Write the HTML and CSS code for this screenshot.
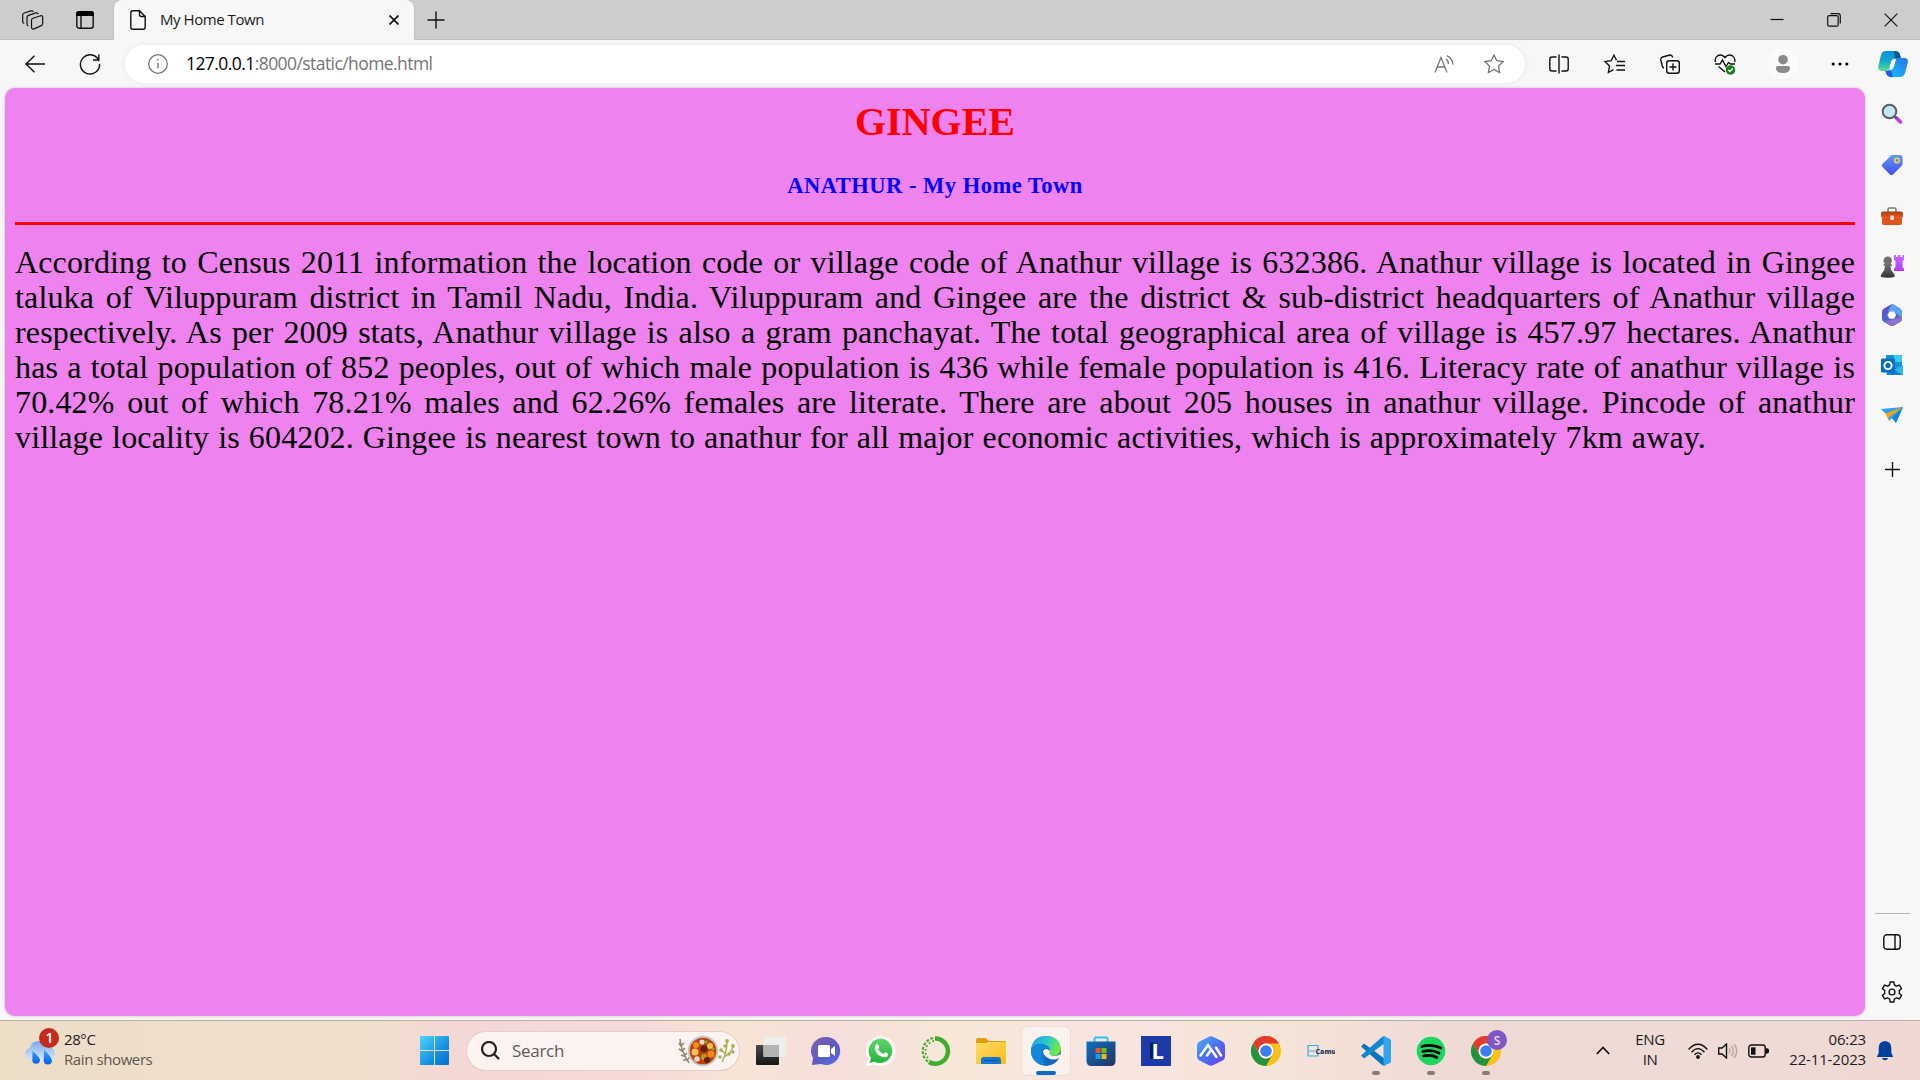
FILE: index.html
```
<!DOCTYPE html>
<html lang="en">
<head>
<meta charset="utf-8">
<title>My Home Town</title>
<link rel="stylesheet" href="styles.css">
</head>
<body>
<svg width="0" height="0" class="defs">
  <defs>
    <linearGradient id="win" x1="0" y1="0" x2="1" y2="1"><stop offset="0" stop-color="#4fd5ff"/><stop offset=".6" stop-color="#1390df"/><stop offset="1" stop-color="#0070d0"/></linearGradient>
    <linearGradient id="copA" x1="0" y1="0" x2="0" y2="1"><stop offset="0" stop-color="#0a8fd8"/><stop offset=".5" stop-color="#12a9d0"/><stop offset="1" stop-color="#5ddc8c"/></linearGradient>
    <linearGradient id="copB" x1="1" y1="0" x2="0" y2="1"><stop offset="0" stop-color="#2b6fe0"/><stop offset=".5" stop-color="#1e9cf5"/><stop offset="1" stop-color="#17c0fa"/></linearGradient>
    <linearGradient id="tag" x1="0" y1="0" x2="0" y2="1"><stop offset="0" stop-color="#5a9cff"/><stop offset="1" stop-color="#4a4ae8"/></linearGradient>
    <linearGradient id="rook" x1="0" y1="0" x2="0" y2="1"><stop offset="0" stop-color="#cf6bff"/><stop offset="1" stop-color="#b13af5"/></linearGradient>
    <linearGradient id="pawn" x1="0" y1="0" x2="0" y2="1"><stop offset="0" stop-color="#777"/><stop offset="1" stop-color="#333"/></linearGradient>
    <linearGradient id="case" x1="0" y1="0" x2="0" y2="1"><stop offset="0" stop-color="#a83c14"/><stop offset="1" stop-color="#e85c1c"/></linearGradient>
    <linearGradient id="m365" x1="0" y1="0" x2="0" y2="1"><stop offset="0" stop-color="#6a4bb5"/><stop offset="1" stop-color="#3f6fe0"/></linearGradient>
    <linearGradient id="cloud" x1="0" y1="0" x2="0" y2="1"><stop offset="0" stop-color="#78a8ea"/><stop offset="1" stop-color="#d8e4fa"/></linearGradient>
    <linearGradient id="drop" x1="0" y1="0" x2="0" y2="1"><stop offset="0" stop-color="#3aa0ff"/><stop offset="1" stop-color="#0060e8"/></linearGradient>
    <linearGradient id="chat" x1="0" y1="0" x2="1" y2="1"><stop offset="0" stop-color="#8a5fa8"/><stop offset=".5" stop-color="#5c5cc0"/><stop offset="1" stop-color="#5b6ae8"/></linearGradient>
    <linearGradient id="wa" x1="0" y1="0" x2="0" y2="1"><stop offset="0" stop-color="#5fd669"/><stop offset="1" stop-color="#26b43c"/></linearGradient>
    <linearGradient id="fold" x1="0" y1="0" x2="1" y2="1"><stop offset="0" stop-color="#ffdc6b"/><stop offset="1" stop-color="#fbb914"/></linearGradient>
    <linearGradient id="edgeTop" x1="0" y1="0" x2="1" y2=".4"><stop offset="0" stop-color="#1c9fe0"/><stop offset=".5" stop-color="#2cc3d6"/><stop offset="1" stop-color="#6bea48"/></linearGradient>
    <linearGradient id="edgeLow" x1="0" y1="0" x2="1" y2="1"><stop offset="0" stop-color="#1490df"/><stop offset="1" stop-color="#0d5cb5"/></linearGradient>
    <linearGradient id="store" x1="0" y1="0" x2="1" y2="1"><stop offset="0" stop-color="#0b72c4"/><stop offset="1" stop-color="#24335c"/></linearGradient>
    <linearGradient id="hex" x1="0" y1="0" x2="1" y2="1"><stop offset="0" stop-color="#4bb0f5"/><stop offset=".5" stop-color="#4a70f2"/><stop offset="1" stop-color="#7138ee"/></linearGradient>
    <linearGradient id="tvDark" x1="0" y1="0" x2="0" y2="1"><stop offset="0" stop-color="#484848"/><stop offset="1" stop-color="#161616"/></linearGradient>
    <symbol id="chrome" viewBox="0 0 30 30">
      <circle cx="15" cy="15" r="15" fill="#fbc116"/>
      <path d="M2 7.5A15 15 0 0 1 28 7.5H15A7.500 7.500 0 0 0 8.500 18.750Z" fill="#e33b2e"/>
      <path d="M2 7.500 8.500 18.750A7.500 7.500 0 0 0 21.500 18.750L15 30A15 15 0 0 1 2 7.500Z" fill="#229342"/>
      <circle cx="15" cy="15" r="7.400" fill="#fff"/><circle cx="15" cy="15" r="5.800" fill="#3b7ded"/>
    </symbol>
  </defs>
</svg>

<div class="screen">
  <header class="titlebar">
    <div class="cell workspaces"><svg width="22" height="20" viewBox="0 0 22 20" class="line thin"><path d="M11 8.300 18.500 5.800Q20.700 5.200 20.700 7.300V13.500Q20.700 15 19.300 15.600L12 18.900Q9.500 19.600 9.500 17V10Q9.500 8.800 11 8.300ZM6.500 16Q5 15.800 5 14V7.500Q5 6 6.500 5.400L14 2.900Q15.700 2.500 16.300 4M2.200 13.500Q.7 13.200.7 11.500V5Q.7 3.500 2.200 3L9 .9Q10.700.5 11.300 1.700"/></svg></div>
    <div class="cell actions"><svg width="18" height="18" viewBox="0 0 18 18" class="line"><rect x=".8" y=".8" width="16.400" height="16.400" rx="2.500"/><path d="M5 4v13"/><path d="M0 5V3Q0 0 3 0H15Q18 0 18 3V5Z" fill="#000" stroke="none"/></svg></div>
    <div class="tab">
      <svg width="16" height="20" viewBox="0 0 16 20" class="line page-icon"><path d="M3 .8H9.500L15.200 6.500V17Q15.200 19.200 13 19.200H3Q.8 19.200.8 17V3Q.8.8 3 .8ZM9.500.8V4.500Q9.500 6.500 11.500 6.500H15.200"/></svg>
      <span class="tab-title">My Home Town</span>
      <svg width="10" height="10" viewBox="0 0 10 10" class="line heavy"><path d="M.5.5 9.500 9.500M9.500.5.5 9.500"/></svg>
    </div>
    <div class="cell newtab"><svg width="18" height="18" viewBox="0 0 18 18" class="line"><path d="M9 .5V17.500M.5 9H17.500"/></svg></div>
    <div class="window-buttons">
      <svg width="14" height="14" viewBox="0 0 14 14" class="line thin"><path d="M.5 6.500H13.500"/></svg>
      <svg width="14" height="14" viewBox="0 0 14 14" class="line thin"><rect x=".7" y="2.700" width="10.500" height="10.500" rx="1.500"/><path d="M3.500.7H11Q13.300.7 13.300 3V10.500"/></svg>
      <svg width="14" height="14" viewBox="0 0 14 14" class="line thin"><path d="M.7.7 13.300 13.300M13.300.7.7 13.300"/></svg>
    </div>
  </header>

  <div class="toolbar">
    <div class="cell back"><svg width="20" height="18" viewBox="0 0 20 18" class="line"><path d="M9.500.7 1 9 9.500 17.300M1 9H20"/></svg></div>
    <div class="cell reload"><svg width="22" height="22" viewBox="0 0 22 22" class="line"><path d="M20 8A9.600 9.600 0 1 0 20.600 11M19.800 1.500V7H14"/></svg></div>
    <div class="omnibox">
      <svg width="20" height="20" viewBox="0 0 20 20" class="line gray"><circle cx="10" cy="10" r="9.300"/><path d="M10 8.800V14.500M10 5V6.500"/></svg>
      <div class="url">127.0.0.1<span>:8000/static/home.html</span></div>
      <svg width="20" height="18" viewBox="0 0 20 18" class="line gray read"><path d="M1 17.500 7 2.500 13 17.500M3.200 12H10.800M12 3.800Q14.500 6 14.500 9M12.800.6Q18.700 3.500 19 9.500"/></svg>
      <svg width="20" height="20" viewBox="0 0 20 20" class="line gray"><path d="M10 1 12.800 6.700 19.100 7.600 14.500 12 15.600 18.500 10 15.500 4.400 18.500 5.500 12 .9 7.600 7.200 6.700Z"/></svg>
    </div>
    <div class="tools">
      <svg width="20" height="20" viewBox="0 0 20 20" class="line"><path d="M7.500 3H3Q.8 3 .8 5V15Q.8 17 3 17H7.500M10 .5V19.500M12.500 3H17Q19.200 3 19.200 5V15Q19.200 17 17 17H12.500"/></svg>
      <svg width="21" height="20" viewBox="0 0 21 20" class="line"><path d="M12.500 6.300 9.900 1.200 7.200 6.700 1 7.600 5.500 12 4.400 18.500 9.500 15.700M13 7.500H21M12 11.500H21M12.500 16H21"/></svg>
      <svg width="20" height="20" viewBox="0 0 20 20" class="line"><rect x="6.700" y="6.700" width="12.600" height="12.600" rx="2.500"/><path d="M13 9.500V16.500M9.500 13H16.500M4 14Q2.800 13.700 2.300 12L.8 6Q.4 3.800 2.500 3L10 1Q11.800.6 12.800 3.500"/></svg>
      <svg width="22" height="21" viewBox="0 0 22 21" class="line"><path d="M1.500 8Q0 4 4 1.500Q8-.3 11 3.500Q14-.3 18 1.500Q22 4 20.500 8M1 10H6L8.500 6 12 12.500 14.500 8.500 16.500 10H21M4.500 12.500 11 18"/><circle cx="16.500" cy="16" r="4.700" fill="#107c10" stroke="none"/><path d="M14.300 16 16 17.500 18.800 14.500" stroke="#fff"/></svg>
      <svg width="30" height="30" viewBox="0 0 30 30"><circle cx="15" cy="15" r="14.300" fill="#fafafa" stroke="#fff"/><circle cx="15" cy="10.700" r="4.800" fill="#8a8a8a"/><path d="M8 19Q8 17 10 17H20Q22 17 22 19 22 24 15 24 8 24 8 19Z" fill="#8a8a8a"/></svg>
      <svg width="18" height="4" viewBox="0 0 18 4"><circle cx="2.200" cy="2" r="1.600"/><circle cx="9" cy="2" r="1.600"/><circle cx="15.800" cy="2" r="1.600"/></svg>
      <svg width="30" height="27" viewBox="0 0 30 27"><path d="M8 0H17Q21 0 22 4L23 8H17Q14 8 13 12L11.500 17Q10.500 20 8 20H3Q-.5 19 .3 15L3 4Q4 0 8 0Z" fill="url(#copA)"/><path d="M16 0Q21 0 22 4L23 8H17Z" fill="#07558d"/><path d="M22 26H13Q9 26 8 22L7.500 20Q11 20 12 17L15.500 8.500Q16.500 7 19 7H26Q31 7 29.700 12L27 22Q26 26 22 26Z" fill="url(#copB)"/><path d="M7.500 20H9.500Q12 20 12.500 17.500L15 26Q9 27 7.500 20Z" fill="#2459d8"/><path d="M13 11Q14 8 17 8L18 8 16.500 14Q15 19 11.500 19.500 12.300 14 13 11Z" fill="#fff"/></svg>
    </div>
  </div>

  <div class="workarea">
    <main class="page">
      <h1>GINGEE</h1>
      <h3>ANATHUR - My Home Town</h3>
      <hr>
      <p>
        <span>According to Census 2011 information the location code or village code of Anathur village is 632386. Anathur village is located in Gingee</span>
        <span>taluka of Viluppuram district in Tamil Nadu, India. Viluppuram and Gingee are the district &amp; sub-district headquarters of Anathur village</span>
        <span>respectively. As per 2009 stats, Anathur village is also a gram panchayat. The total geographical area of village is 457.97 hectares. Anathur</span>
        <span>has a total population of 852 peoples, out of which male population is 436 while female population is 416. Literacy rate of anathur village is</span>
        <span>70.42% out of which 78.21% males and 62.26% females are literate. There are about 205 houses in anathur village. Pincode of anathur</span>
        <span class="last">village locality is 604202. Gingee is nearest town to anathur for all major economic activities, which is approximately 7km away.</span>
      </p>
    </main>
    <aside class="sidebar">
      <svg width="22" height="22" viewBox="0 0 22 22"><path d="M15.500 15 19.500 19" stroke="#b93cf5" stroke-width="3.600" stroke-linecap="round"/><path d="M13 13 15.500 15.500" stroke="#555" stroke-width="2"/><circle cx="8.500" cy="8.500" r="6.800" fill="#c3e6fb" stroke="#5d5d5d" stroke-width="2"/></svg>
      <svg width="22" height="22" viewBox="0 0 22 22"><path d="M11 1H19Q21.500 1 21.500 3.500V10Q21.500 11 20.500 12L12 20.500Q10.500 22 9 20.500L1.500 13Q0 11.500 1.500 10L9.500 2Q10.200 1 11 1Z" fill="url(#tag)"/><circle cx="16" cy="6.500" r="2.200" fill="#5d83e8" stroke="#ffd84d" stroke-width="1.500"/></svg>
      <svg width="22" height="18" viewBox="0 0 22 18"><path d="M7 5V2.500Q7 1 8.500 1H13.500Q15 1 15 2.500V5" fill="none" stroke="#777" stroke-width="1.500"/><path d="M1 11H21V16Q21 18 19 18H3Q1 18 1 16Z" fill="#df541b"/><path d="M2 4.500H20Q22 4.500 22 6.500V9Q22 11 20 11H2Q0 11 0 9V6.500Q0 4.500 2 4.500Z" fill="url(#case)"/><rect x="9.200" y="8.500" width="3.800" height="4.500" rx="1" fill="#ddd"/></svg>
      <svg width="24" height="24" viewBox="0 0 24 24"><path d="M14 1H16V3H18V1H20.500V3H22.500V1H24V6L22.500 7V13L24 15V17H14V15L15.500 13V7L14 6Z" fill="url(#rook)"/><circle cx="7.700" cy="6.700" r="4.200" fill="#707070"/><path d="M5 9.500H10.500L12 10.500V11.800H10.500Q10.500 16 13 18.500L14.500 21V23Q8 24.500 1 23V21L2.500 18.500Q5 16 5 11.800H3.500V10.500Z" fill="url(#pawn)"/></svg>
      <svg width="22" height="22" viewBox="0 0 22 22"><path d="M9 1Q11-.5 13.500 1L19 4.500Q21 6 21 8V15Q21 17 19 18L13 21.500Q11 22.500 9 21.500L3 18Q1 17 1 15V7.500Q1 5.500 3 4.500Z" fill="url(#m365)"/><path d="M10.500.4Q12-.1 13.500 1L19 4.500Q21 6 21 8V14L14.500 9 7 7Z" fill="#5ba7eb"/><path d="M3 18 14 15 21 12V15Q21 17 19 18L13 21.500Q11 22.500 9 21.500Z" fill="#9271ce"/><path d="M8.500 7.500H13L15.200 11 13 14.800H8.500L6.300 11Z" fill="#f7f7f7"/></svg>
      <svg width="22" height="22" viewBox="0 0 22 22"><rect x="5" y="1" width="16" height="17" rx="1" fill="#0a6cbe"/><path d="M5 1H13V8H5ZM13 8H21V14H13Z" fill="#1590df"/><path d="M13 1H21V8H13Z" fill="#40c8f2"/><path d="M5 20 22 11V20Q22 21 21 21H6Z" fill="#2fb8ee"/><path d="M5 11 22 21H6Z" fill="#1180d3"/><rect x="0" y="4.500" width="14" height="14" rx="1.300" fill="#0a6fc2"/><circle cx="7" cy="11.500" r="3.600" fill="none" stroke="#fff" stroke-width="1.900"/></svg>
      <svg width="23" height="18" viewBox="0 0 23 18"><path d="M0 3 22 1 15 17 11 12 8 15 6 9Z" fill="#2ba2ee"/><path d="M4.500 7.500 22 1 8 11.500 7 13Z" fill="#f5a30d"/><path d="M11 12 22 1 15 17Z" fill="#1784e0"/></svg>
      <svg width="15" height="15" viewBox="0 0 15 15" class="line"><path d="M7.500 0V15M0 7.500H15"/></svg>
      <div class="divider"></div>
      <svg width="18" height="16" viewBox="0 0 18 16" class="line"><rect x=".8" y=".8" width="16.400" height="14.400" rx="3"/><path d="M12 .8V15.200"/></svg>
      <svg width="22" height="22" viewBox="0 0 22 22" class="line"><path d="M9.200 1H12.800L13.400 4Q14.500 4.300 15.500 5.200L18.400 4.200 20.500 7.700 18.200 9.700Q18.500 11 18.200 12.300L20.500 14.300 18.400 17.800 15.500 16.800Q14.500 17.700 13.400 18L12.800 21H9.200L8.600 18Q7.500 17.700 6.500 16.800L3.600 17.800 1.500 14.300 3.800 12.300Q3.500 11 3.800 9.700L1.500 7.700 3.600 4.200 6.500 5.200Q7.500 4.300 8.600 4Z"/><circle cx="11" cy="11" r="2.900"/></svg>
    </aside>
  </div>

  <footer class="taskbar">
    <div class="weather">
      <svg width="36" height="38" viewBox="0 0 36 38"><path d="M7 31.500Q1 31.500 1 26 1 21 6 20 7 13 15 13 23 12 25 19 31 20 31 26 31 31 25 31Z" fill="url(#cloud)"/><path d="M8.500 23Q16 29 16 32.500A3.900 3.900 0 0 1 8.300 32.500ZM20 22Q28 29 28 33A4.200 4.200 0 0 1 19.700 33Z" fill="url(#drop)"/><circle cx="25" cy="10" r="10" fill="#c42b1c"/><text x="25.500" y="15" text-anchor="middle" class="badge-text">1</text></svg>
      <div class="two-line"><span>28°C</span><span class="dim">Rain showers</span></div>
    </div>
    <svg class="start" width="29" height="29" viewBox="0 0 29 29"><path d="M0 1Q0 0 1 0H14V14H0ZM15 0H28Q29 0 29 1V14H15ZM0 15H14V29H1Q0 29 0 28ZM15 15H29V28Q29 29 28 29H15Z" fill="url(#win)"/></svg>
    <div class="search">
      <svg width="19" height="19" viewBox="0 0 19 19" class="glass"><circle cx="8" cy="8" r="7"/><path d="M13 13 17.500 17.500"/></svg>
      <span>Search</span>
      <svg width="58" height="32" viewBox="0 0 58 32"><g fill="none" stroke="#8d8a70" stroke-width="1.600"><path d="M3 4Q4 16 12 28M2 8 4 11 7 8M2 14 5 16 8 13M4 20 7 21 10 18M6 25 10 25 13 22"/></g><g fill="none" stroke="#a3ab5c" stroke-width="1.400"><path d="M50 6Q50 17 45 27M56 11Q55 18 47 22M44 15 49 19"/></g><g fill="#a3b04c"><circle cx="50" cy="6" r="1.900"/><circle cx="48" cy="11" r="1.700"/><circle cx="56" cy="11" r="1.900"/><circle cx="44" cy="15" r="1.800"/><circle cx="56" cy="17" r="1.700"/><circle cx="52" cy="19" r="1.700"/><circle cx="43" cy="22" r="1.800"/></g><circle cx="26" cy="16" r="15.300" fill="#c9c6c8"/><circle cx="26" cy="16" r="13.300" fill="#bd410f"/><g fill="#f08a1d"><circle cx="19" cy="10" r="3"/><circle cx="34" cy="19" r="3.500"/><circle cx="27" cy="22" r="3"/></g><g fill="#f5c158"><circle cx="18" cy="17" r="3.500"/><circle cx="33" cy="11" r="3"/></g><g fill="#e9d8c8"><circle cx="25" cy="7" r="2.600"/><circle cx="20" cy="24" r="2.800"/></g><g fill="#61210f"><circle cx="27" cy="14" r="3.500"/><circle cx="30" cy="25" r="3"/></g><g fill="#74b52b"><circle cx="29" cy="7" r="1.600"/><circle cx="26" cy="21" r="1.600"/><circle cx="36" cy="14" r="1.600"/></g></svg>
    </div>
    <nav class="apps">
      <div class="app"><svg width="30" height="30" viewBox="0 0 30 30"><rect x="0" y="9" width="23" height="20" rx="1" fill="url(#tvDark)"/><rect x="7.500" y="1" width="22.500" height="20" rx="1" fill="#efeeee"/><path d="M7.500 9H23V21H7.500Z" fill="#b5b4b3"/></svg></div>
      <div class="app"><svg width="30" height="30" viewBox="0 0 30 30"><path d="M15 1A14 14 0 1 1 10 28L1 29 2 22A14 14 0 0 1 15 1Z" fill="url(#chat)"/><rect x="7" y="9" width="12" height="12" rx="1.500" fill="#fff"/><path d="M20 13 24 10V20L20 17Z" fill="#fff"/></svg></div>
      <div class="app"><svg width="30" height="30" viewBox="0 0 30 30"><path d="M15 0A15 15 0 1 1 8 28.500L0 30 2 22.500A15 15 0 0 1 15 0Z" fill="#fff"/><path d="M15 2.500A12.300 12.300 0 1 1 8.500 25.800L3.500 27 5 22A12.300 12.300 0 0 1 15 2.500Z" fill="url(#wa)"/><path d="M10.500 8Q12 7.500 12.500 9L13.300 11.500 12 13.300Q14 17 17.500 18L19.300 16.300 22 17.600Q22.500 21 19 21.500 10.500 20.500 8.800 12.500 8.500 9.500 10.500 8Z" fill="#fff"/></svg></div>
      <div class="app"><svg width="30" height="30" viewBox="0 0 30 30" fill="none"><path d="M14 2.500A12.600 12.600 0 1 1 8 26" stroke="#3fae2a" stroke-width="4.500"/><path d="M12 2A13.500 13.500 0 0 0 8 26.500" stroke="#3fae2a" stroke-width="2.200" stroke-dasharray="2.800 1.700"/><path d="M13 5A10.500 10.500 0 0 0 9 24" stroke="#3fae2a" stroke-width="1.800" stroke-dasharray="1.700 2.300"/></svg></div>
      <div class="app"><svg width="30" height="30" viewBox="0 0 30 30"><path d="M0 9V4Q0 2 2 2H10L13 5H29Q30 5 30 6V9Z" fill="#df9f08"/><path d="M0 7H10L13 6H30V28H0Z" fill="url(#fold)"/><path d="M5 28V24Q5 21 8 21H22Q25 21 25 24V28Z" fill="#1277ce"/><path d="M8.500 24.500H21.500" stroke="#0b4c93"/></svg></div>
      <div class="app active"><svg width="30" height="30" viewBox="0 0 30 30"><circle cx="15" cy="15" r="14.900" fill="url(#edgeLow)"/><path d="M0 13Q2 0 15 0 28 0 30 12 30 19 22 20 17 20 19 16 19 10 12 8 4 7 0 13Z" fill="url(#edgeTop)"/><path d="M0 13Q4 7 11 8 18 9 19 13 14 10 11 15 8 22 15 29 2 28 0 17Z" fill="#1287dc"/><path d="M12 15Q15 11 19 15 17 20 23 20 27 20 29.500 18L28.500 22Q22 25 17 22 12 19 12 15Z" fill="#fdf2ef"/></svg></div>
      <div class="app"><svg width="30" height="30" viewBox="0 0 30 30"><path d="M8.500 7V3Q8.500 1.500 10 1.500H20Q21.500 1.500 21.500 3V7" fill="none" stroke="#2cc3f5" stroke-width="2"/><path d="M.5 5.500H29.500V25Q29.500 30 24.500 30H5.500Q.5 30 .5 25Z" fill="url(#store)"/><path d="M9.500 12H14.500V17H9.500Z" fill="#f1502d"/><path d="M15.500 12H20.500V17H15.500Z" fill="#80bb18"/><path d="M9.500 18H14.500V23H9.500Z" fill="#12a1ee"/><path d="M15.500 18H20.500V23H15.500Z" fill="#fbb80c"/></svg></div>
      <div class="app"><svg width="30" height="30" viewBox="0 0 30 30"><rect width="30" height="30" fill="#1c3ba8"/><path d="M12 20V6L9 8V23H22Z" fill="#071c4e"/><text x="10.500" y="22.500" class="logo-l">L</text></svg></div>
      <div class="app"><svg width="30" height="30" viewBox="0 0 30 30"><path d="M12.500 1Q15-.5 17.500 1L26.500 5.500Q29 7 29 9.500V20.500Q29 23 26.500 24.500L17.500 29Q15 30.500 12.500 29L3.500 24.500Q1 23 1 20.500V9.500Q1 7 3.500 5.500Z" fill="url(#hex)"/><path d="M4.500 19.500 12 9 20.500 21M11 19.500 14.500 14.500M20 11.500 25 19.500" fill="none" stroke="#fff" stroke-width="2.400" stroke-linecap="round"/></svg></div>
      <div class="app"><svg width="30" height="30"><use href="#chrome" width="30" height="30"/></svg></div>
      <div class="app"><svg width="28" height="14" viewBox="0 0 28 14"><path d="M11 5V1.500H1V12H11V9M2 7H8" fill="none" stroke="#3caade" stroke-width="1.200"/><text x="8.500" y="9.500" class="logo-camu">Camu</text></svg></div>
      <div class="app running"><svg width="30" height="30" viewBox="0 0 30 30"><path d="M0 10.500 3 7.500 24 23V30L21 29Z" fill="#0a75ba"/><path d="M0 19.500 3 22.500 24 7V0L21 1Z" fill="#1289cf"/><path d="M22.500 0 29 3Q30 3.500 30 5V25Q30 26.500 29 27L22.500 30Z" fill="#30a4ef"/></svg></div>
      <div class="app running"><svg width="30" height="30" viewBox="0 0 30 30"><circle cx="15" cy="15" r="14.300" fill="#1ed760"/><path d="M6 10.500Q16 7.500 25 12M7 15.500Q15.500 13 23 17M7.500 20Q15 18 21 21.500" fill="none" stroke="#000" stroke-width="2.700" stroke-linecap="round"/></svg></div>
      <div class="app running"><svg width="38" height="36" viewBox="0 0 38 36" class="badged"><use href="#chrome" x="0" y="6" width="30" height="30"/><circle cx="26" cy="10" r="10" fill="#7e57c2"/><text x="26" y="14.500" text-anchor="middle" class="badge-s">S</text></svg></div>
    </nav>
    <div class="tray">
      <svg width="14" height="9" viewBox="0 0 14 9" class="line heavy chevron"><path d="M.8 8 7 1.500 13.200 8"/></svg>
      <div class="two-line lang"><span>ENG</span><span>IN</span></div>
      <svg width="20" height="16" viewBox="0 0 20 16" class="line"><path d="M.6 6.500Q10-4 19.400 6.500M3.500 9.200Q10 2 16.500 9.200M6.500 11.800Q10 8 13.500 11.800"/><circle cx="10" cy="14" r="1.200" fill="#111"/></svg>
      <svg width="20" height="16" viewBox="0 0 20 16" class="line"><path d="M.7 5H4L8.500 1V15L4 11H.7Z"/><g stroke="#b5a6a3"><path d="M11 5.500Q13 8 11 10.500M13.500 3Q17 8 13.500 13M16 1Q21.500 8 16 15"/></g></svg>
      <svg width="21" height="14" viewBox="0 0 21 14" class="line"><rect x=".8" y="1" width="16.400" height="12" rx="2.500"/><rect x="3" y="3.300" width="4.500" height="7.400" fill="#111" stroke="none"/><path d="M18.500 5V9Q20.500 9 20.500 7T18.500 5Z" fill="#111"/></svg>
      <div class="two-line clock"><span>06:23</span><span>22-11-2023</span></div>
      <svg width="16" height="20" viewBox="0 0 16 20"><path d="M8 0Q14.300.5 14.300 7V12L16 15.200V16H0V15.200L1.700 12V7Q1.700.5 8 0ZM5 17H11Q10.500 19.300 8 19.300T5 17Z" fill="#00409b"/></svg>
    </div>
  </footer>
</div>
</body>
</html>
```
FILE: styles.css
```
* { box-sizing: border-box; }

body {
  margin: 0;
  overflow: hidden;
  background: #f7f7f7;
}

svg { display: block; flex: none; }
.defs { position: absolute; }

.screen {
  width: 1920px;
  height: 1080px;
  display: grid;
  grid-template-columns: 1920px;
  grid-template-rows: 40px 48px 932px 60px;
  font-family: "Open Sans", "Noto Sans", sans-serif;
  color: #1b1b1b;
}

.line { fill: none; stroke: #111; stroke-width: 1.4; }
.line.thin { stroke-width: 1.2; }
.line.heavy { stroke-width: 1.7; }
.line.gray { stroke: #757575; stroke-width: 1.3; }

.cell { display: flex; align-items: center; justify-content: center; }

/* title bar */
.titlebar {
  display: flex;
  align-items: stretch;
  background: #cdcdcd;
  box-shadow: inset 0 -1px #bdbdbd;
}
.workspaces { width: 65px; }
.actions { width: 40px; margin-right: 9px; }
.tab {
  width: 300px;
  display: flex;
  align-items: center;
  padding: 0 15px 0 16px;
  background: #f7f7f7;
  border-radius: 8px 8px 0 0;
  box-shadow: 0 0 2px #aaa;
}
.tab-title {
  flex: 1;
  margin-left: 14px;
  padding-bottom: 2px;
  font-size: 15px;
  letter-spacing: -.45px;
}
.newtab { width: 43px; }
.window-buttons {
  margin-left: auto;
  padding-right: 22px;
  display: flex;
  align-items: center;
  gap: 43px;
}

/* toolbar */
.toolbar {
  display: flex;
  align-items: center;
  background: #f7f7f7;
}
.back { width: 70px; }
.reload { width: 40px; margin-right: 15px; }
.omnibox {
  flex: none;
  width: 1400px;
  height: 38px;
  display: flex;
  align-items: center;
  padding: 0 21px 0 23px;
  background: #fff;
  border-radius: 19px;
  box-shadow: 0 0 4px #e4e4e4;
}
.url {
  flex: 1;
  margin-left: 18px;
  padding-bottom: 2px;
  font-size: 17.5px;
  letter-spacing: -.57px;
  color: #000;
}
.url span { color: #757575; }
.read { margin-right: 30px; }
.tools {
  width: 395px;
  display: grid;
  grid-template-columns: 68px 43px 67px 44px 72px 42px 59px;
  justify-items: center;
  align-items: center;
}
.tools svg:last-child { margin-left: 4px; }

/* work area */
.workarea {
  display: grid;
  grid-template-columns: 1860px 54px;
  padding: 0 0 4px 5px;
  background: #f7f7f7;
}
.page {
  padding: 8px 10px;
  background: #ee82ee;
  border-radius: 10px;
  box-shadow: 0 0 3px #bbb;
  font-family: "Liberation Serif", serif;
}
.page h1 {
  margin: 0;
  height: 50px;
  line-height: 51px;
  font-size: 40px;
  text-align: center;
  color: #f00;
}
.page h3 {
  margin: 23px 0 0;
  height: 34px;
  line-height: 34px;
  font-size: 22.5px;
  letter-spacing: .5px;
  text-align: center;
  color: #00f;
}
.page hr {
  height: 3px;
  margin: 19px 0 0;
  border: 0;
  background: #f00;
}
.page p {
  margin: 20px 0 0;
  font-size: 32px;
  line-height: 35px;
  letter-spacing: .15px;
  color: #000;
}
.page p span {
  display: block;
  white-space: nowrap;
  text-align: justify;
  text-align-last: justify;
}
.page p .last { width: 1691px; }

/* sidebar */
.sidebar {
  display: grid;
  grid-template-rows: 51px 51px 51px 49px 50px 50px 50px 58px 416px 56px 44px;
  justify-items: center;
  align-items: center;
}
.divider {
  align-self: end;
  width: 35px;
  height: 1px;
  background: #b5b5b5;
}

/* taskbar */
.taskbar {
  display: flex;
  align-items: center;
  border-top: 1px solid #b9aca6;
  background: linear-gradient(90deg, #eddec8 0, #f0dfcd 370px, #f4d8d5 450px, #f6dad8 640px, #f7e5d6 740px, #f6dedb 830px, #f6e8d8 950px, #f9e5df 1080px, #f5e4d9 1280px, #eed9d5 1480px, #efdbd6 1700px, #f0d8d3 1920px);
}
.two-line {
  display: flex;
  flex-direction: column;
  padding-bottom: 3px;
  font-size: 15px;
  line-height: 20px;
  letter-spacing: -.4px;
}
.dim { color: #5d5751; }
.weather {
  width: 396px;
  margin-left: 24px;
  display: flex;
  align-items: center;
  gap: 4px;
}
.weather svg { margin-top: -7px; }
.badge-text { font-size: 14px; font-weight: 600; fill: #fff; }
.search {
  width: 272px;
  height: 38px;
  margin: 0 4px 0 18px;
  padding: 0 4px 0 14px;
  display: flex;
  align-items: center;
  border-radius: 19px;
  background: #fcf3f1;
  box-shadow: 0 0 0 1px #e5cdca, 0 1px #b3a5a2;
}
.search span {
  flex: 1;
  margin-left: 12px;
  font-size: 17px;
  letter-spacing: -.3px;
  color: #605b5a;
}
.glass { fill: none; stroke: #222; stroke-width: 2.2; stroke-linecap: round; }
.apps { display: flex; }
.app {
  position: relative;
  width: 48px;
  height: 48px;
  margin: 0 3.5px;
  display: flex;
  align-items: center;
  justify-content: center;
}
.active {
  background: #fbf2ee;
  border-radius: 5px;
  box-shadow: 0 0 0 1px #ecdcd7;
}
.active::after, .running::after {
  content: "";
  position: absolute;
  bottom: 0;
  left: 20px;
  width: 8px;
  height: 4px;
  border-radius: 2px;
  background: #877b78;
}
.active::after {
  left: 14px;
  width: 20px;
  background: #0f6cc4;
}
.badged { margin: -6px -8px 0 0; }
.badge-s { font-size: 12px; font-weight: 600; fill: #e6d9f8; }
.logo-l { font-size: 22px; font-weight: 700; fill: #fff; }
.logo-camu { font-size: 7px; font-weight: 800; fill: #263b5b; }
.tray {
  flex: 1;
  display: flex;
  align-items: center;
  gap: 10px;
  padding-right: 27px;
}
.chevron { margin-left: 83px; }
.lang { width: 60px; margin-right: -2px; align-items: center; }
.clock {
  margin-left: auto;
  margin-right: 1px;
  text-align: right;
  letter-spacing: -.15px;
}
```
